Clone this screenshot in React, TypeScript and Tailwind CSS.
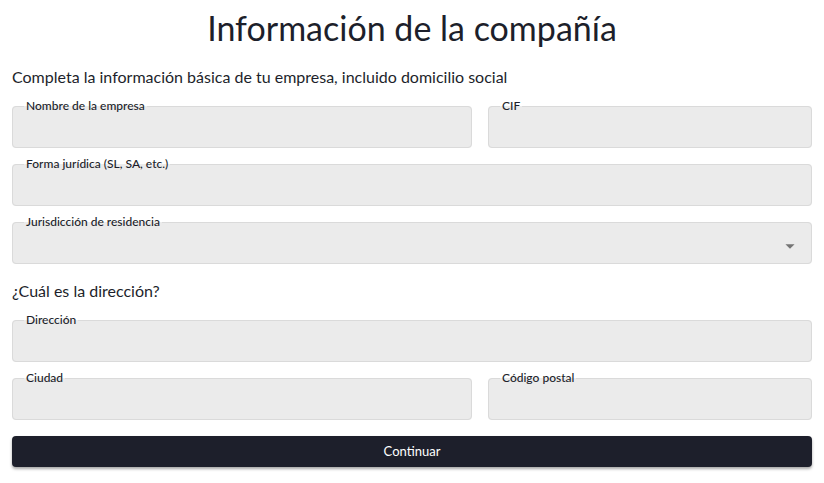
import { ReactNode } from 'react'

const font = { fontFamily: 'Lato, "Noto Sans", sans-serif' }

function Field({ label, children }: { label: string; children?: ReactNode }) {
  return (
    <fieldset className="relative h-[48px] min-w-0 rounded-[4px] border border-[#dadada] bg-[#ebebeb]">
      <legend className="ml-[11px] px-[2px] text-[12px] leading-[12px] font-medium text-[#1d1f2b]">{label}</legend>
      {children}
    </fieldset>
  )
}

export default function App() {
  return (
    <div className="min-h-screen bg-white px-[12px] text-[#1d1f2b]" style={font}>
      <h1 className="pt-[8px] text-center text-[34px] leading-[40px] font-normal">Información de la compañía</h1>
      <p className="mt-[19px] text-[16px] leading-[20px]">Completa la información básica de tu empresa, incluido domicilio social</p>

      <div className="mt-[13px] flex flex-col gap-[10px]">
        <div className="grid grid-cols-[460px_1fr] gap-[16px]">
          <Field label="Nombre de la empresa" />
          <Field label="CIF" />
        </div>
        <Field label="Forma jurídica (SL, SA, etc.)" />
        <Field label="Jurisdicción de residencia">
          <svg viewBox="0 0 24 24" className="absolute right-[10px] top-[7px] h-[22px] w-[22px] fill-[#757575]">
            <path d="M7 10l5 5 5-5z" />
          </svg>
        </Field>
      </div>

      <h2 className="mt-[17px] text-[16px] leading-[20px] font-normal">¿Cuál es la dirección?</h2>

      <div className="mt-[13px] flex flex-col gap-[10px]">
        <Field label="Dirección" />
        <div className="grid grid-cols-[460px_1fr] gap-[16px]">
          <Field label="Ciudad" />
          <Field label="Código postal" />
        </div>
      </div>

      <button className="mt-[16px] h-[31px] w-full rounded-[4px] bg-[#1d1f2b] text-[13px] text-white shadow-[0_2px_3px_rgba(0,0,0,0.35)]">
        Continuar
      </button>
    </div>
  )
}
